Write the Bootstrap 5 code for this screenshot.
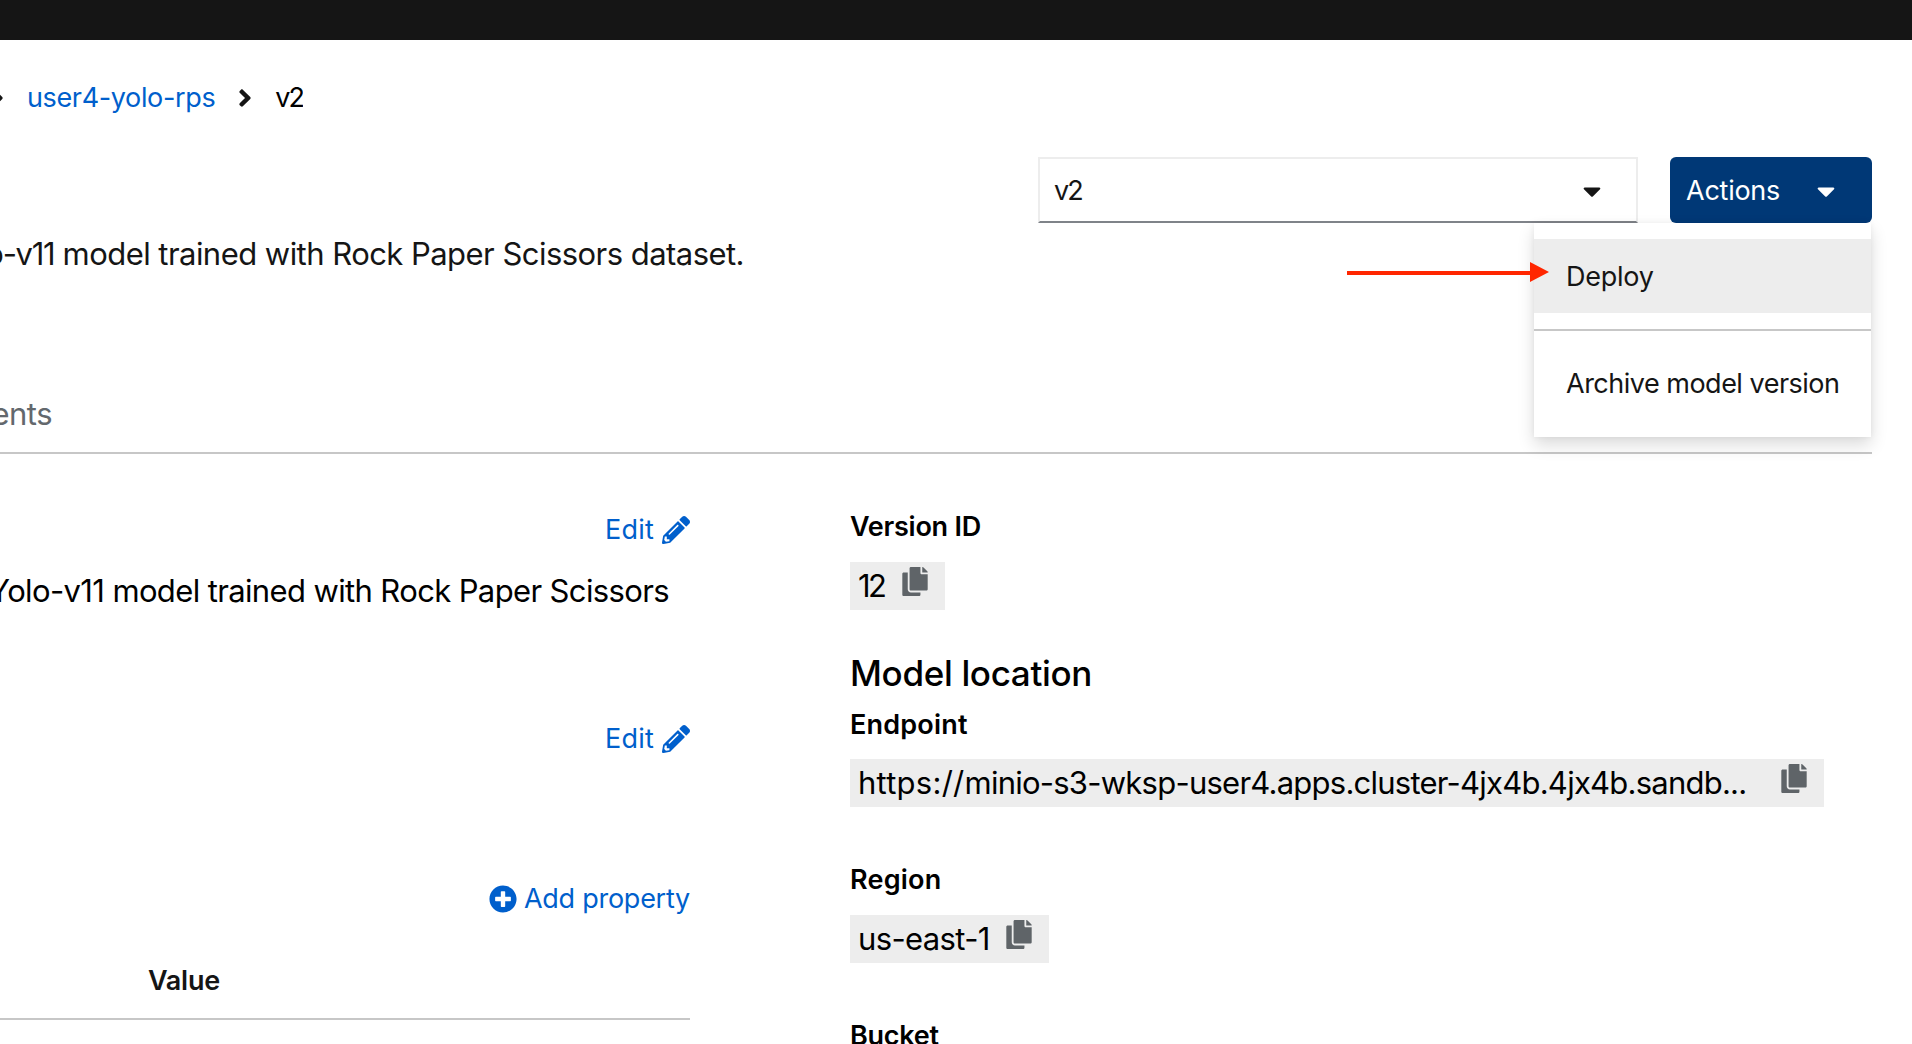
<!DOCTYPE html>
<html lang="en">
<head>
<meta charset="utf-8">
<meta name="viewport" content="width=device-width, initial-scale=1">
<title>user4-yolo-rps v2</title>
<link rel="stylesheet" href="https://cdn.jsdelivr.net/npm/bootstrap@5.3.0/dist/css/bootstrap.min.css">
<style>
  body { height: 1044px; overflow: hidden; font-family: Inter, "Liberation Sans", sans-serif; color: #151515; background: #fff; white-space: nowrap; }
  svg { display: block; flex: none; fill: currentColor; }
  a { color: #005fcc; text-decoration: none; }
  .masthead { height: 40px; background: #151515; }
  .t-sm { font-size: 27px; line-height: 42px; letter-spacing: -.25px; }
  .t-md { font-size: 31px; line-height: 48px; letter-spacing: -.54px; }
  .t-tight { letter-spacing: -.63px; }
  .t-url { letter-spacing: -.76px; }
  .t-scheme { letter-spacing: .25px; }
  .t-prefix { letter-spacing: -1.3px; }
  .t-snug { letter-spacing: -.5px; }
  .t-crumb { letter-spacing: -.35px; }
  .t-loose { letter-spacing: .2px; }
  .t-v2 { letter-spacing: -2px; }
  .t-12 { letter-spacing: -2.6px; }
  .ink { color: #000; }
  .clip-left { display: flex; justify-content: flex-end; overflow: hidden; }
  .crumbs { width: 303px; padding-top: 37px; gap: 23px; }
  .page-head { height: 271px; padding: 38px 40px 0 0; }
  .page-head .clip-left { width: 744px; padding-top: 73px; }
  .controls { gap: 32px; }
  .picker { width: 600px; height: 66px; border: 2px solid #ededed; border-bottom-color: #7f8389; padding: 1px 35px 0 14px; }
  .actions-btn, .actions-btn:hover { width: 202px; height: 66px; padding: 1px 37px 0 16px; border: 0; border-radius: 6px; background: #003876; color: #fff; }
  .actions-menu { top: 66px; right: 1px; left: auto; width: 337px; padding: 16px 0; border: 0; border-radius: 0; box-shadow: 0 8px 16px rgba(3,3,3,.14), 0 0 6px rgba(3,3,3,.06); }
  .actions-menu .dropdown-item { padding: 16px 32px; color: #151515; }
  .actions-menu .dropdown-item.hot { padding: 17px 32px 15px; background: #ededed; }
  .actions-menu .dropdown-divider { margin: 16px 0; border-top: 2px solid #c7c7c7; opacity: 1; }
  .pointer { position: absolute; left: -323px; top: 105px; z-index: 1100; fill: #ff2600; }
  .tab-strip { width: 1872px; height: 64px; border-bottom: 2px solid #c7c7c7; color: #63686d; }
  .tab-strip .clip-left { width: 52px; }
  .details { gap: 160px; }
  .left-col { width: 690px; padding-top: 55px; }
  .right-col { width: 974px; padding-top: 52px; }
  .gap-edit { gap: 8px; }
  .desc { width: 669px; margin-top: 16px; }
  .edit-2 { margin-top: 103px; }
  .add-prop { margin-top: 118px; gap: 7px; }
  .props-head { height: 60px; margin-top: 40px; padding-left: 148px; border-bottom: 2px solid #c7c7c7; }
  .copy-box { display: flex; width: max-content; height: 48px; margin-top: 14px; padding: 0 17px 0 8px; background: #ededed; color: #000; }
  .copy-box svg { margin-top: 5px; color: #5f6468; }
  .box-num { width: 95px; }
  .box-region { width: 199px; }
  .box-url { width: 974px; margin-top: 13px; }
  .loc-title { font-size: 35px; line-height: 48px; letter-spacing: -.34px; font-weight: 500; margin: 39px 0 7px; }
  .mt-group { margin-top: 52px; }
</style>
</head>
<body>
<svg class="d-none" xmlns="http://www.w3.org/2000/svg">
  <symbol id="i-pencil" viewBox="0 0 512 512"><path d="M497.9 142.1l-46.1 46.1c-4.7 4.7-12.3 4.7-17 0l-111-111c-4.7-4.7-4.7-12.3 0-17l46.1-46.1c18.7-18.7 49.1-18.7 67.9 0l60.1 60.1c18.8 18.7 18.8 49.1 0 67.9zM284.2 99.8L21.6 362.4.4 483.9c-2.9 16.4 11.4 30.6 27.8 27.8l121.5-21.3 262.6-262.6c4.7-4.7 4.7-12.3 0-17l-111-111c-4.8-4.7-12.4-4.7-17.1 0zM124.1 339.9c-5.5-5.5-5.5-14.3 0-19.8l154-154c5.5-5.5 14.3-5.5 19.8 0s5.5 14.3 0 19.8l-154 154c-5.5 5.5-14.3 5.5-19.8 0zM88 424h48v36.3l-64.5 11.3-31.1-31.1L51.7 376H88v48z"/></symbol>
  <symbol id="i-copy" viewBox="0 0 448 512"><path d="M320 448v40c0 13.255-10.745 24-24 24H24c-13.255 0-24-10.745-24-24V120c0-13.255 10.745-24 24-24h72v296c0 30.879 25.121 56 56 56h168zm0-344V0H152c-13.255 0-24 10.745-24 24v368c0 13.255 10.745 24 24 24h272c13.255 0 24-10.745 24-24V128H344c-13.2 0-24-10.8-24-24zm120.971-31.029L375.029 7.029A24 24 0 0 0 358.059 0H352v96h96v-6.059a24 24 0 0 0-7.029-16.97z"/></symbol>
  <symbol id="i-plus" viewBox="0 0 512 512"><path d="M256 8C119 8 8 119 8 256s111 248 248 248 248-111 248-248S393 8 256 8zm144 276c0 6.600-5.400 12-12 12h-92v92c0 6.600-5.400 12-12 12h-56c-6.600 0-12-5.400-12-12v-92h-92c-6.600 0-12-5.400-12-12v-56c0-6.600 5.400-12 12-12h92v-92c0-6.600 5.400-12 12-12h56c6.600 0 12 5.400 12 12v92h92c6.600 0 12 5.400 12 12v56z"/></symbol>
  <symbol id="i-angle" viewBox="0 0 256 512"><path d="M224.3 273l-136 136c-9.400 9.400-24.600 9.400-33.900 0l-22.600-22.600c-9.400-9.400-9.400-24.600 0-33.900l96.400-96.400-96.400-96.400c-9.400-9.400-9.400-24.600 0-33.900L54.300 103c9.400-9.400 24.600-9.400 33.900 0l136 136c9.500 9.400 9.500 24.600.1 34z"/></symbol>
  <symbol id="i-caret" viewBox="0 0 320 512" preserveAspectRatio="none"><path d="M31.300 192h257.300c17.800 0 26.700 21.500 14.100 34.100L174.100 354.700c-7.800 7.800-20.500 7.800-28.300 0L17.200 226.100C4.600 213.500 13.500 192 31.300 192z"/></symbol>
</svg>

<header class="masthead"></header>

<nav class="clip-left crumbs align-items-center t-sm" aria-label="breadcrumb">
  <svg width="14" height="28"><use href="#i-angle"/></svg>
  <a class="t-crumb" href="#">user4-yolo-rps</a>
  <svg width="14" height="28"><use href="#i-angle"/></svg>
  <span class="ink t-v2">v2</span>
</nav>

<section class="page-head d-flex justify-content-between align-items-start">
  <div class="clip-left t-md"><span><span class="t-prefix">o-v11</span> model trained with Rock Paper Scissors dataset.</span></div>
  <div class="controls d-flex">
    <div class="picker d-flex align-items-center justify-content-between t-sm">
      <span class="t-v2">v2</span>
      <svg width="18" height="28"><use href="#i-caret"/></svg>
    </div>
    <div class="dropdown">
      <button class="actions-btn btn d-flex align-items-center justify-content-between t-sm" type="button" aria-expanded="true">
        <span>Actions</span>
        <svg width="18" height="28"><use href="#i-caret"/></svg>
      </button>
      <div class="dropdown-menu actions-menu show">
        <a class="dropdown-item hot t-sm" href="#">Deploy</a>
        <hr class="dropdown-divider">
        <a class="dropdown-item t-sm t-snug" href="#">Archive model version</a>
      </div>
      <svg class="pointer" width="202" height="20" viewBox="0 0 202 20"><path d="M0 9h183V0l19 10-19 10v-7H0z"/></svg>
    </div>
  </div>
</section>

<div class="tab-strip"><div class="clip-left t-md"><span>ents</span></div></div>

<main class="details d-flex align-items-start">
  <section class="left-col">
    <a class="d-flex justify-content-end align-items-center gap-edit t-sm t-loose" href="#">Edit<svg width="28" height="28"><use href="#i-pencil"/></svg></a>
    <div class="clip-left desc t-md t-tight ink"><span>Yolo-v11 model trained with Rock Paper Scissors</span></div>
    <a class="edit-2 d-flex justify-content-end align-items-center gap-edit t-sm t-loose" href="#">Edit<svg width="28" height="28"><use href="#i-pencil"/></svg></a>
    <a class="add-prop d-flex justify-content-end align-items-center t-sm" href="#"><svg width="28" height="28"><use href="#i-plus"/></svg>Add property</a>
    <div class="props-head t-sm fw-semibold">Value</div>
  </section>
  <section class="right-col ink">
    <div class="t-sm fw-semibold">Version ID</div>
    <div class="copy-box box-num justify-content-between t-md"><span class="t-12">12</span><svg width="26" height="29"><use href="#i-copy"/></svg></div>
    <h2 class="loc-title">Model location</h2>
    <div class="t-sm t-loose fw-semibold">Endpoint</div>
    <div class="copy-box box-url justify-content-between t-md t-url"><span><span class="t-scheme">https://</span>minio-s3-wksp-user4.apps.cluster-4jx4b.4jx4b.sandb...</span><svg width="26" height="29"><use href="#i-copy"/></svg></div>
    <div class="mt-group t-sm t-loose fw-semibold">Region</div>
    <div class="copy-box box-region justify-content-between t-md t-tight"><span>us-east-1</span><svg width="26" height="29"><use href="#i-copy"/></svg></div>
    <div class="mt-group t-sm fw-semibold">Bucket</div>
  </section>
</main>
<script src="https://cdn.jsdelivr.net/npm/bootstrap@5.3.0/dist/js/bootstrap.bundle.min.js"></script>
</body>
</html>
